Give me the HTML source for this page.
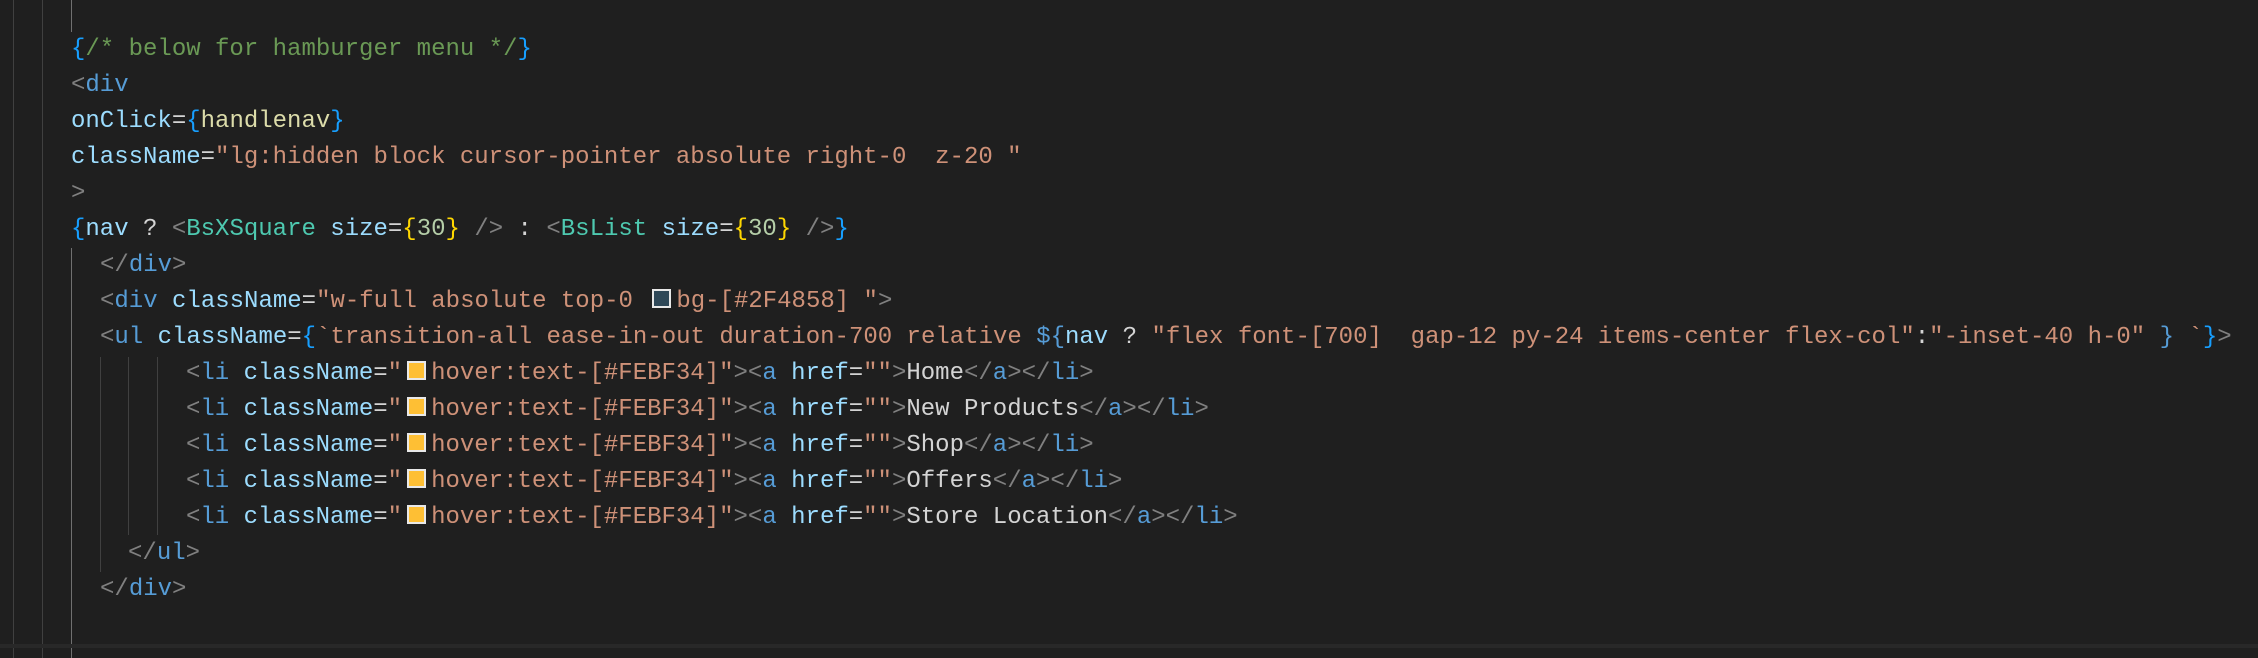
<!DOCTYPE html>
<html><head><meta charset="utf-8"><style>
html,body{margin:0;padding:0;}
body{width:2258px;height:658px;background:#1f1f1f;position:relative;overflow:hidden;font-family:"Liberation Mono",monospace;font-size:24px;}
.l{position:absolute;left:0;height:36px;line-height:36px;white-space:pre;color:#d4d4d4;}
.g{position:absolute;width:1px;background:#404040;}
.c{color:#6a9955}.p{color:#808080}.t{color:#569cd6}.a{color:#9cdcfe}.s{color:#ce9178}
.b{color:#179fff}.y{color:#ffd700}.f{color:#dcdcaa}.k{color:#4ec9b0}.n{color:#b5cea8}
.sw{display:inline-block;width:15px;height:15px;border:2px solid #e8e8e8;margin:0 5px;vertical-align:-1px;}
</style></head><body>
<div class="g" style="left:13px;top:0;height:658px"></div>
<div class="g" style="left:42px;top:0;height:658px"></div>
<div class="g" style="left:71px;top:0;height:32px;background:#707070"></div>
<div class="g" style="left:71px;top:248px;height:410px;background:#707070"></div>
<div class="g" style="left:100px;top:357px;height:215px"></div>
<div class="g" style="left:128px;top:357px;height:178px"></div>
<div class="g" style="left:157px;top:357px;height:178px"></div>
<div style="position:absolute;left:0;top:644px;width:2258px;height:4px;background:#282828"></div>

<div class="l" style="top:32px;left:71px"><span class="b">{</span><span class="c">/* below for hamburger menu */</span><span class="b">}</span></div>
<div class="l" style="top:68px;left:71px"><span class="p">&lt;</span><span class="t">div</span></div>
<div class="l" style="top:104px;left:71px"><span class="a">onClick</span>=<span class="b">{</span><span class="f">handlenav</span><span class="b">}</span></div>
<div class="l" style="top:140px;left:71px"><span class="a">className</span>=<span class="s">"lg:hidden block cursor-pointer absolute right-0  z-20 "</span></div>
<div class="l" style="top:176px;left:71px"><span class="p">&gt;</span></div>
<div class="l" style="top:212px;left:71px"><span class="b">{</span><span class="a">nav</span> ? <span class="p">&lt;</span><span class="k">BsXSquare</span> <span class="a">size</span>=<span class="y">{</span><span class="n">30</span><span class="y">}</span> <span class="p">/&gt;</span> : <span class="p">&lt;</span><span class="k">BsList</span> <span class="a">size</span>=<span class="y">{</span><span class="n">30</span><span class="y">}</span> <span class="p">/&gt;</span><span class="b">}</span></div>
<div class="l" style="top:248px;left:100px"><span class="p">&lt;/</span><span class="t">div</span><span class="p">&gt;</span></div>
<div class="l" style="top:284px;left:100px"><span class="p">&lt;</span><span class="t">div</span> <span class="a">className</span>=<span class="s">"w-full absolute top-0 <span class="sw" style="background:#2F4858"></span>bg-[#2F4858] "</span><span class="p">&gt;</span></div>
<div class="l" style="top:320px;left:100px"><span class="p">&lt;</span><span class="t">ul</span> <span class="a">className</span>=<span class="b">{</span><span class="s">`transition-all ease-in-out duration-700 relative </span><span class="t">${</span><span class="a">nav</span> ? <span class="s">"flex font-[700]  gap-12 py-24 items-center flex-col"</span>:<span class="s">"-inset-40 h-0"</span> <span class="t">}</span><span class="s"> `</span><span class="b">}</span><span class="p">&gt;</span></div>
<div class="l" style="top:356px;left:186px"><span class="p">&lt;</span><span class="t">li</span> <span class="a">className</span>=<span class="s">"<span class="sw" style="background:#FEBF34"></span>hover:text-[#FEBF34]"</span><span class="p">&gt;&lt;</span><span class="t">a</span> <span class="a">href</span>=<span class="s">""</span><span class="p">&gt;</span>Home<span class="p">&lt;/</span><span class="t">a</span><span class="p">&gt;&lt;/</span><span class="t">li</span><span class="p">&gt;</span></div>
<div class="l" style="top:392px;left:186px"><span class="p">&lt;</span><span class="t">li</span> <span class="a">className</span>=<span class="s">"<span class="sw" style="background:#FEBF34"></span>hover:text-[#FEBF34]"</span><span class="p">&gt;&lt;</span><span class="t">a</span> <span class="a">href</span>=<span class="s">""</span><span class="p">&gt;</span>New Products<span class="p">&lt;/</span><span class="t">a</span><span class="p">&gt;&lt;/</span><span class="t">li</span><span class="p">&gt;</span></div>
<div class="l" style="top:428px;left:186px"><span class="p">&lt;</span><span class="t">li</span> <span class="a">className</span>=<span class="s">"<span class="sw" style="background:#FEBF34"></span>hover:text-[#FEBF34]"</span><span class="p">&gt;&lt;</span><span class="t">a</span> <span class="a">href</span>=<span class="s">""</span><span class="p">&gt;</span>Shop<span class="p">&lt;/</span><span class="t">a</span><span class="p">&gt;&lt;/</span><span class="t">li</span><span class="p">&gt;</span></div>
<div class="l" style="top:464px;left:186px"><span class="p">&lt;</span><span class="t">li</span> <span class="a">className</span>=<span class="s">"<span class="sw" style="background:#FEBF34"></span>hover:text-[#FEBF34]"</span><span class="p">&gt;&lt;</span><span class="t">a</span> <span class="a">href</span>=<span class="s">""</span><span class="p">&gt;</span>Offers<span class="p">&lt;/</span><span class="t">a</span><span class="p">&gt;&lt;/</span><span class="t">li</span><span class="p">&gt;</span></div>
<div class="l" style="top:500px;left:186px"><span class="p">&lt;</span><span class="t">li</span> <span class="a">className</span>=<span class="s">"<span class="sw" style="background:#FEBF34"></span>hover:text-[#FEBF34]"</span><span class="p">&gt;&lt;</span><span class="t">a</span> <span class="a">href</span>=<span class="s">""</span><span class="p">&gt;</span>Store Location<span class="p">&lt;/</span><span class="t">a</span><span class="p">&gt;&lt;/</span><span class="t">li</span><span class="p">&gt;</span></div>
<div class="l" style="top:536px;left:128px"><span class="p">&lt;/</span><span class="t">ul</span><span class="p">&gt;</span></div>
<div class="l" style="top:572px;left:100px"><span class="p">&lt;/</span><span class="t">div</span><span class="p">&gt;</span></div>
</body></html>
